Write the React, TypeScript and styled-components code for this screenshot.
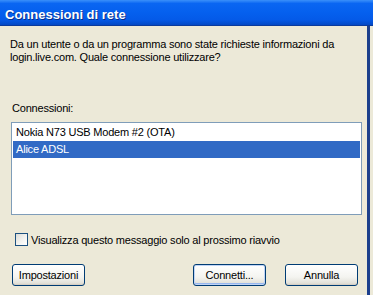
import React, { useState } from 'react';
import styled, { createGlobalStyle } from 'styled-components';

const GlobalStyle = createGlobalStyle`
  html, body {
    margin: 0;
    padding: 0;
    background: #ece9d8;
    overflow: hidden;
  }
`;

const connections = ['Nokia N73 USB Modem #2 (OTA)', 'Alice ADSL'];

const App = () => {
    const [selected, setSelected] = useState(1);
    const [onlyNext, setOnlyNext] = useState(false);

    return (
        <>
            <GlobalStyle />
            <Window>
                <TitleBar>Connessioni di rete</TitleBar>
                <Body>
                    <Message>
                        Da un utente o da un programma sono state richieste informazioni da
                        <br />
                        login.live.com. Quale connessione utilizzare?
                    </Message>
                    <Label>Connessioni:</Label>
                    <ListBox>
                        {connections.map((name, i) => (
                            <ListItem key={name} selected={i === selected} onClick={() => setSelected(i)}>
                                {name}
                            </ListItem>
                        ))}
                    </ListBox>
                    <CheckRow onClick={() => setOnlyNext(!onlyNext)}>
                        <CheckBox>{onlyNext ? '✓' : ''}</CheckBox>
                        Visualizza questo messaggio solo al prossimo riavvio
                    </CheckRow>
                    <ButtonRow>
                        <Button>Impostazioni</Button>
                        <Spacer />
                        <Button primary>Connetti...</Button>
                        <Button>Annulla</Button>
                    </ButtonRow>
                </Body>
            </Window>
        </>
    );
};

const Window = styled.div`
    width: 373px;
    height: 295px;
    display: flex;
    flex-direction: column;
    font-family: 'Liberation Sans', Arial, sans-serif;
    font-size: 11px;
    letter-spacing: -0.2px;
    color: #000;
`;

const TitleBar = styled.div`
    height: 26px;
    flex: none;
    display: flex;
    align-items: center;
    padding: 3px 0 0 5px;
    box-sizing: border-box;
    background: linear-gradient(
        to bottom,
        #3a90fa 0%,
        #0a66f2 14%,
        #0560ee 50%,
        #045ae8 78%,
        #0348c4 100%
    );
    border-bottom: 1px solid #0a3a9c;
    color: #fff;
    font-family: 'Liberation Sans', Arial, sans-serif;
    font-weight: bold;
    font-size: 13px;
    letter-spacing: 0;
    text-shadow: 1px 1px 0 #0a2f8a;
`;

const Body = styled.div`
    flex: 1;
    display: flex;
    flex-direction: column;
    padding: 12px 9px 0 10px;
    border-right: 3px solid #1c3f8c;
    width: 370px;
    box-sizing: border-box;
`;

const Message = styled.div`
    line-height: 13px;
    height: 64px;
`;

const Label = styled.div`
    line-height: 13px;
    padding-left: 2px;
    margin-bottom: 7px;
`;

const ListBox = styled.div`
    margin-left: 1px;
    width: 351px;
    height: 93px;
    box-sizing: border-box;
    border: 1px solid #7f9db9;
    background: #fff;
    padding: 1px;
`;

const ListItem = styled.div<{ selected?: boolean }>`
    height: 17px;
    line-height: 17px;
    padding-left: 3px;
    background: ${(p) => (p.selected ? '#316ac5' : 'transparent')};
    color: ${(p) => (p.selected ? '#fff' : '#000')};
    cursor: default;
`;

const CheckRow = styled.label`
    display: flex;
    align-items: center;
    gap: 3px;
    margin: 18px 0 0 5px;
    height: 13px;
`;

const CheckBox = styled.span`
    width: 13px;
    height: 13px;
    box-sizing: border-box;
    border: 1px solid #1c5180;
    background: linear-gradient(135deg, #dcdcd7 0%, #f5f5f2 60%, #fff 100%);
    font-size: 10px;
    line-height: 11px;
    text-align: center;
    color: #21a121;
`;

const ButtonRow = styled.div`
    display: flex;
    gap: 19px;
    margin-top: 18px;
    margin-left: 2px;
`;

const Spacer = styled.div`
    flex: 1;
    margin-left: -19px;
`;

const Button = styled.button<{ primary?: boolean }>`
    width: 73px;
    height: 22px;
    padding: 0;
    font-family: 'Liberation Sans', Arial, sans-serif;
    font-size: 11px;
    letter-spacing: -0.2px;
    color: #000;
    border: 1px solid #003c74;
    border-radius: 3px;
    background: linear-gradient(to bottom, #ffffff 0%, #f4f4f0 60%, #e3e2da 90%, #d6d0c5 100%);
    box-shadow: ${(p) =>
        p.primary
            ? 'inset 0 0 0 1px #c0d4f5, inset 0 -1px 0 1px #97b7ef'
            : 'inset 0 -1px 0 #d6d0c5'};
`;

export default App;
